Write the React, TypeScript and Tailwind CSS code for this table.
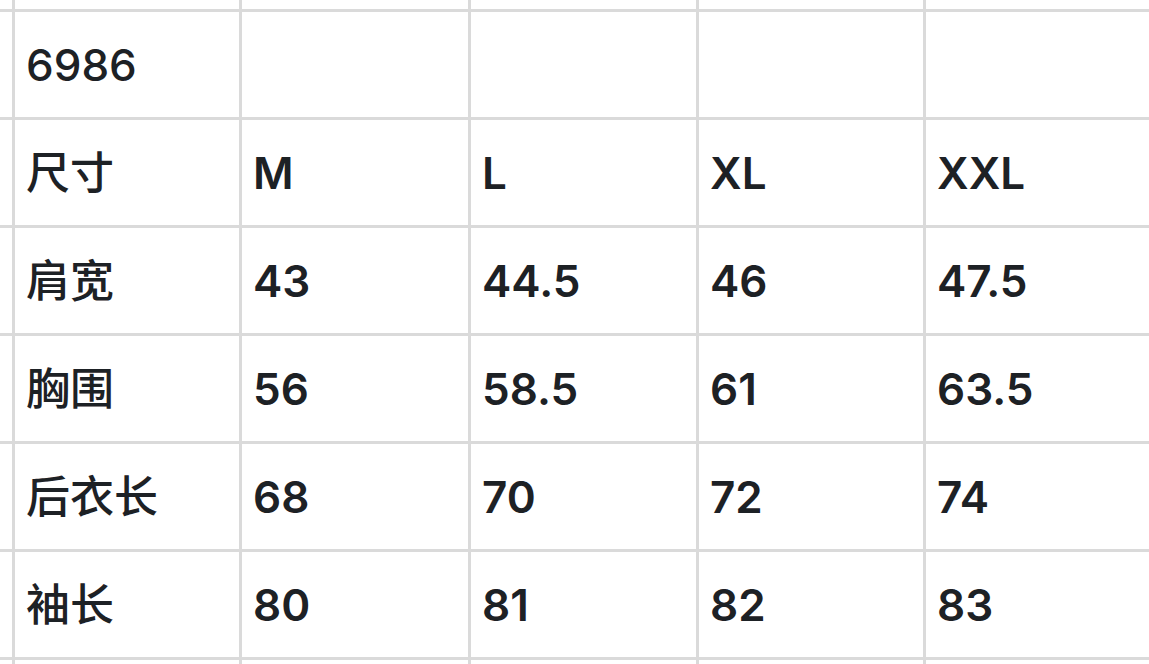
import React from "react";

const rows: string[][] = [
  ["6986", "", "", "", ""],
  ["尺寸", "M", "L", "XL", "XXL"],
  ["肩宽", "43", "44.5", "46", "47.5"],
  ["胸围", "56", "58.5", "61", "63.5"],
  ["后衣长", "68", "70", "72", "74"],
  ["袖长", "80", "81", "82", "83"],
];

const isCJK = (s: string) => /[\u4e00-\u9fff]/.test(s);

export default function App() {
  const cells: React.ReactNode[] = [];
  // top partial row
  for (let c = 0; c < 6; c++) cells.push(<div key={`t${c}`} className="bg-white" />);
  rows.forEach((r, ri) => {
    cells.push(<div key={`l${ri}`} className="bg-white" />);
    r.forEach((t, ci) => {
      const weight = isCJK(t) ? "font-medium" : ri === 0 ? "font-medium" : "font-semibold";
      cells.push(
        <div
          key={`${ri}-${ci}`}
          className={`bg-white flex items-center pl-[11px] text-[44px] leading-none text-[#1d2125] ${weight}`}
        >
          {t}
        </div>
      );
    });
  });
  for (let c = 0; c < 6; c++) cells.push(<div key={`b${c}`} className="bg-white" />);

  return (
    <div
      className="w-[1149px] h-[664px] overflow-hidden bg-[#dadada]"
      style={{ fontFamily: "Inter, 'Noto Sans CJK SC', sans-serif" }}
    >
      <div className="grid h-full grid-cols-[12px_224px_226px_225px_224px_1fr] grid-rows-[9px_105px_105px_105px_105px_105px_105px_1fr] gap-[3px]">
        {cells}
      </div>
    </div>
  );
}
